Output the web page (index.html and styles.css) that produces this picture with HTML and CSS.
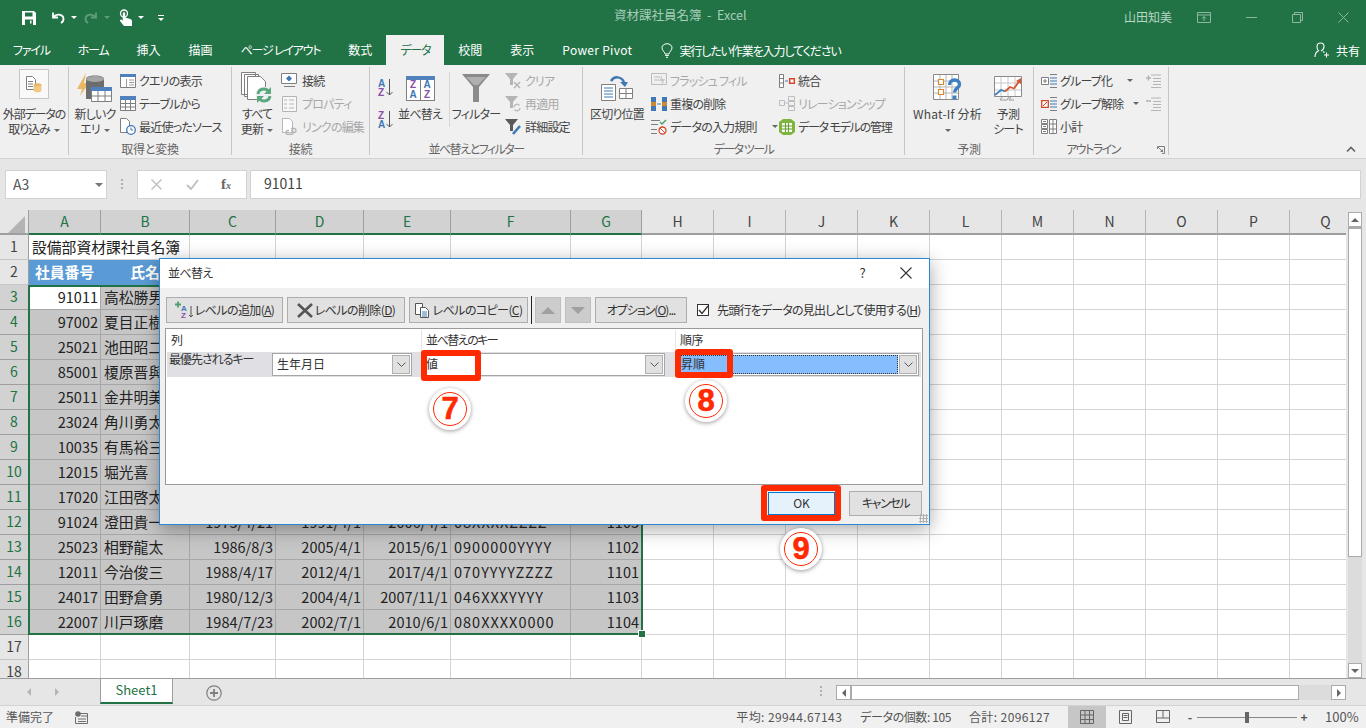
FILE: index.html
```html
<!DOCTYPE html>
<html lang="ja">
<head>
    <meta charset="UTF-8">
    <meta name="viewport" content="width=device-width, initial-scale=1.0">
    <title>資材課社員名簿 - Excel</title>
    <link rel="stylesheet" href="styles.css">
</head>
<body>
<div class="app">

    <!-- タイトルバー -->
    <header class="titlebar">
        <div class="qat">
            <svg class="qat-save" width="16" height="16" viewBox="0 0 16 16"><path fill="#fff" fill-rule="evenodd" d="M1 1h12l2 2v12H1zM4 2.500v4h7.500v-4zM4 9.500V15h8V9.500z"/><path fill="#fff" d="M9 10.500h1.500v3H9z"/></svg>
            <svg class="qat-undo" width="16" height="16" viewBox="0 0 16 16"><path fill="none" stroke="#fff" stroke-width="1.800" d="M3 2.500v5h5M3.500 7C6 3.500 13 4 13.500 8.500c.2 2-1 3.500-2.500 4.500"/></svg>
            <span class="caret-w"></span>
            <svg class="qat-redo" width="16" height="16" viewBox="0 0 16 16"><path fill="none" stroke="#5e9c7c" stroke-width="1.800" d="M13 2.500v5H8M12.500 7C10 3.500 3 4 2.500 8.500c-.2 2 1 3.500 2.500 4.500"/></svg>
            <span class="caret-w dim"></span>
            <svg class="qat-touch" width="14" height="18" viewBox="0 0 14 18"><circle cx="5" cy="4.500" r="3.500" fill="none" stroke="#fff" stroke-width="1.300"/><path fill="#fff" d="M3.800 4.500c0-1.600 2.400-1.600 2.400 0v4l5 1.500c1.200.4 1.800 1.200 1.800 2.400V17H5l-4-5c-.6-1 .8-2 1.800-1.200l1 .9z"/></svg>
            <span class="caret-w"></span>
            <span class="qat-more"></span>
        </div>
        <div class="doc-title">資材課社員名簿&nbsp; - &nbsp;Excel</div>
        <div class="win">
            <span class="user">山田知美</span>
            <svg class="win-ribbon" width="14" height="11" viewBox="0 0 14 11"><path fill="none" stroke="#8fb8a2" d="M.5.500h13v10H.500zM.5 3h13M7 9V4.500M5 6.500l2-2 2 2"/></svg>
            <svg class="win-btn" width="11" height="1" viewBox="0 0 11 1"><path stroke="#8fb8a2" d="M0 .5h11"/></svg>
            <svg class="win-btn" width="11" height="11" viewBox="0 0 11 11"><path fill="none" stroke="#8fb8a2" d="M.5 2.500h8v8h-8zM2.500 2.500v-2h8v8h-2"/></svg>
            <svg class="win-btn" width="11" height="11" viewBox="0 0 11 11"><path stroke="#8fb8a2" d="M.5.500l10 10M10.500.500l-10 10"/></svg>
        </div>
    </header>

    <!-- リボンのタブ -->
    <nav class="tabs">
        <span class="tab kana">ファイル</span>
        <span class="tab kana">ホーム</span>
        <span class="tab">挿入</span>
        <span class="tab">描画</span>
        <span class="tab kana">ページ レイアウト</span>
        <span class="tab">数式</span>
        <span class="tab kana active">データ</span>
        <span class="tab">校閲</span>
        <span class="tab">表示</span>
        <span class="tab latin">Power Pivot</span>
        <span class="tell">
            <svg width="12" height="15" viewBox="0 0 12 15"><path fill="none" stroke="#fff" d="M4 11c0-2-3-3.500-3-6.200C1 2.500 3.200.700 6 .700s5 1.800 5 4.100C11 7.500 8 9 8 11zM4.200 12.500h3.600M5 14.300h2"/></svg>
            <span class="tell-text">実行したい作業を入力してください</span>
        </span>
        <span class="share">
            <svg width="16" height="16" viewBox="0 0 16 16"><path fill="none" stroke="#fff" stroke-width="1.100" d="M1 15c0-3.500 2-5.500 3.500-6.200C3 7.500 3 5.800 3 4.500 3 2.500 4.500 1 6.500 1S10 2.500 10 4.500 9 8 7 9M9 9.500c.5.300 1 .7 1.400 1.100M12.500 10.500v5M10 13h5"/></svg>
            共有
        </span>
    </nav>

    <!-- リボン -->
    <div class="ribbon">
        <section class="group g-ext">
            <div class="group-body">
                <div class="big ext-btn">
                    <div class="ext-box">
                        <svg width="16" height="17" viewBox="0 0 16 17"><path fill="#fff" stroke="#7f7f7f" d="M.5.500h6l3 3v10h-9z"/><path stroke="#7f7f7f" d="M2 5.500h5M2 8h5M2 10.500h5"/><ellipse cx="11.500" cy="9" rx="4" ry="1.800" fill="#e8b866"/><path fill="#f1c983" d="M7.500 9v5.500c0 1 1.800 1.800 4 1.800s4-.8 4-1.800V9c0 1-1.800 1.800-4 1.800S7.500 10 7.500 9z"/></svg>
                    </div>
                    <span class="big-text">外部データの<br>取り込み<i class="caret"></i></span>
                </div>
            </div>
            <div class="group-label"></div>
        </section>

        <section class="group g-get">
            <div class="group-body">
                <div class="big b-query">
                    <div class="icon-slot">
                        <svg width="36" height="30" viewBox="0 0 36 30"><path fill="#e8b866" d="M9 0L0 16h5L3 23 12 10H7z"/><path fill="#6d6d6d" d="M9 6c0-2 4-3.500 9-3.500S27 4 27 6v20H9z"/><ellipse cx="18" cy="6" rx="9" ry="3" fill="#a6a6a6"/><path fill="#fff" stroke="#7f7f7f" d="M14.500 15.500h20v13h-20z"/><path fill="#4f81bd" d="M14 14h21v4H14z"/><path stroke="#7f7f7f" d="M21 18v10M28 18v10M15 23h19"/></svg>
                    </div>
                    <span class="big-text">新しいク<br>エリ<i class="caret"></i></span>
                </div>
                <div class="stack s-get">
                    <div class="row"><svg width="16" height="14" viewBox="0 0 16 14"><path fill="#fff" stroke="#7f7f7f" d="M.5.500h15v13H.500z"/><path fill="#4f81bd" d="M0 0h16v3H0z"/><path stroke="#9a9a9a" d="M9 6h5M9 8.500h5M9 11h5M6.500 5v8"/></svg>クエリの表示</div>
                    <div class="row"><svg width="16" height="15" viewBox="0 0 16 15"><path fill="#fff" stroke="#7f7f7f" d="M.5.500h15v14H.500z"/><path fill="#4f81bd" d="M0 0h16v4H0z"/><path stroke="#7f7f7f" d="M5.500 4v10M10.500 4v10M1 7.500h14M1 11h14"/></svg>テーブルから</div>
                    <div class="row"><svg width="16" height="17" viewBox="0 0 16 17"><path fill="#fff" stroke="#7f7f7f" d="M.5.500h6l3 3v11h-9z"/><circle cx="11" cy="12" r="4.300" fill="#fff" stroke="#3f78b5" stroke-width="1.300"/><path stroke="#3f78b5" fill="none" d="M11 9.500V12h2"/></svg>最近使ったソース</div>
                </div>
            </div>
            <div class="group-label">取得と変換</div>
        </section>

        <section class="group g-conn">
            <div class="group-body">
                <div class="big b-refresh">
                    <div class="icon-slot">
                        <svg width="32" height="32" viewBox="0 0 32 32"><path fill="#fff" stroke="#7f7f7f" d="M.5.500h14v22H.500zM3.500 2.500h14v22h-14z"/><path fill="#fff" stroke="#7f7f7f" d="M6.500 4.500h13l5 5v18h-18z"/><circle cx="23" cy="23" r="8.500" fill="#f0f0f0"/><path fill="none" stroke="#5ba87e" stroke-width="3" d="M17 22c.5-3 3-5 6-5 2 0 3.500 1 4.500 2.500M29 24c-.5 3-3 5-6 5-2 0-3.500-1-4.500-2.500"/><path fill="#5ba87e" d="M30 15v7h-7zM16 31v-7h7z"/></svg>
                    </div>
                    <span class="big-text">すべて<br>更新<i class="caret"></i></span>
                </div>
                <div class="stack s-conn">
                    <div class="row"><svg width="18" height="15" viewBox="0 0 18 15"><path fill="#fff" stroke="#7f7f7f" d="M.5.500h15v10H.500z"/><path fill="#3f78b5" d="M8 2.500l3 3-3 3-3-3z"/><path stroke="#7f7f7f" d="M3 13.500h11"/></svg>接続</div>
                    <div class="row off"><svg width="18" height="16" viewBox="0 0 18 16"><path fill="#f7f7f7" stroke="#b5b5b5" d="M1.500.500h14v15h-14z"/><path stroke="#b5b5b5" d="M3 4h3M8 4h5M3 8h3M8 8h5M3 12h3M8 12h5"/></svg>プロパティ</div>
                    <div class="row off"><svg width="18" height="17" viewBox="0 0 18 17"><path fill="#fff" stroke="#b5b5b5" d="M1.500.500h7l3 3v11h-10z"/><path fill="none" stroke="#b5b5b5" stroke-width="1.300" d="M8 12.500h-1a2 2 0 0 0 0 4h3a2 2 0 0 0 0-4M12 14.500h1a2 2 0 0 0 0-4h-3"/></svg>リンクの編集</div>
                </div>
            </div>
            <div class="group-label">接続</div>
        </section>

        <section class="group g-sort">
            <div class="group-body">
                <div class="az">
                    <div class="az-item"><span class="az-letters"><b class="blue">A</b><b class="purple">Z</b></span><svg width="7" height="17" viewBox="0 0 7 17"><path fill="none" stroke="#555" d="M3.500 0v16M.5 13l3 3 3-3"/></svg></div>
                    <div class="az-item"><span class="az-letters"><b class="purple">Z</b><b class="blue">A</b></span><svg width="7" height="17" viewBox="0 0 7 17"><path fill="none" stroke="#555" d="M3.500 0v16M.5 13l3 3 3-3"/></svg></div>
                </div>
                <div class="big b-sort">
                    <div class="icon-slot sort-icon">
                        <div class="sort-card"><span class="cell-c"><b class="purple">Z</b><b class="blue">A</b></span><span class="cell-c"><b class="blue">A</b><b class="purple">Z</b></span></div>
                    </div>
                    <span class="big-text">並べ替え</span>
                </div>
                <div class="sep"></div>
                <div class="big b-filter">
                    <div class="icon-slot">
                        <svg width="28" height="28" viewBox="0 0 28 28"><path fill="#8a8a8a" d="M0 0h28L17 13v15h-6V13z"/><path fill="#b0b0b0" d="M4 3h20l-8 8h-4z"/></svg>
                    </div>
                    <span class="big-text">フィルター</span>
                </div>
                <div class="stack s-filter">
                    <div class="row off"><svg width="17" height="16" viewBox="0 0 17 16"><path fill="#b5b5b5" d="M0 0h13L8 6v6H5V6z"/><path stroke="#b5b5b5" stroke-width="1.500" d="M9 9l6 6M15 9l-6 6"/></svg>クリア</div>
                    <div class="row off"><svg width="17" height="16" viewBox="0 0 17 16"><path fill="#b5b5b5" d="M0 0h13L8 6v6H5V6z"/><path fill="none" stroke="#b5b5b5" stroke-width="1.300" d="M9 11a3 3 0 0 1 5.500-1.500M15 12a3 3 0 0 1-5.500 1.500"/></svg>再適用</div>
                    <div class="row"><svg width="17" height="16" viewBox="0 0 17 16"><path fill="#5a5a5a" d="M0 0h13L8 6v6H5V6z"/><path stroke="#3f78b5" stroke-width="2.500" d="M8 15l7-8"/></svg>詳細設定</div>
                </div>
            </div>
            <div class="group-label tight">並べ替えとフィルター</div>
        </section>

        <section class="group g-tools">
            <div class="group-body">
                <div class="big b-split">
                    <div class="icon-slot">
                        <svg width="32" height="26" viewBox="0 0 32 26"><path fill="#fff" stroke="#7f7f7f" d="M.5 9.500h14v16H.500z"/><path stroke="#3f78b5" d="M3 13h9M3 16h9M3 19h9M3 22h9"/><path fill="#fff" stroke="#7f7f7f" d="M18.500 13.500h13v10h-13z"/><path stroke="#7f7f7f" d="M25 14v9M19 18.500h12"/><path fill="none" stroke="#3f78b5" stroke-width="2.500" d="M10 6C13 1 20 1 23 7"/><path fill="#3f78b5" d="M19 7h8l-3 5z"/></svg>
                    </div>
                    <span class="big-text">区切り位置</span>
                </div>
                <div class="stack s-tools1">
                    <div class="row off"><svg width="16" height="15" viewBox="0 0 16 15"><path fill="none" stroke="#bdbdbd" d="M.5.500h15v11H.500z"/><path stroke="#bdbdbd" d="M3 4h6M3 7h5"/><path fill="#c9c9c9" d="M11 2l-3 6h3l-1 6 4-8h-3z"/></svg>フラッシュ フィル</div>
                    <div class="row"><svg width="16" height="14" viewBox="0 0 16 14"><path fill="#3f78b5" d="M0 0h5v5H0z"/><path fill="#d08a2e" d="M0 5h5v4H0z"/><path fill="#3f78b5" d="M0 9h5v5H0zM11 0h5v5h-5z"/><path fill="#d08a2e" d="M11 5h5v4h-5z"/><path fill="#3f78b5" d="M11 9h5v5h-5zM6 6.500h4v1H6z"/></svg>重複の削除</div>
                    <div class="row"><svg width="16" height="16" viewBox="0 0 16 16"><path stroke="#7f7f7f" d="M0 1.500h9M0 5.500h7M0 10.500h6M0 14.500h6"/><path fill="none" stroke="#4ea06e" stroke-width="1.500" d="M9 3l2 2 4-4"/><circle cx="11.500" cy="11.500" r="3.500" fill="#fff" stroke="#d9452a" stroke-width="1.300"/><path stroke="#d9452a" d="M9 9l5 5"/></svg>データの入力規則<i class="caret far"></i></div>
                </div>
                <div class="stack s-tools2">
                    <div class="row"><svg width="16" height="14" viewBox="0 0 16 14"><path fill="#fff" stroke="#7f7f7f" d="M.5.500h4v13h-4z"/><path stroke="#7f7f7f" d="M1 4.500h3M1 9h3"/><path stroke="#3f78b5" d="M6 7h3"/><path fill="#fff" stroke="#d9452a" stroke-width="1.500" d="M10.700 4.700h4.600v4.600h-4.600z"/></svg>統合</div>
                    <div class="row off"><svg width="16" height="15" viewBox="0 0 16 15"><path fill="none" stroke="#bdbdbd" d="M.5 4.500h5v5h-5zM9.500.500h6v4h-6zM9.500 5.500h6v4h-6zM9.500 10.500h6v4h-6zM6 7h3"/></svg>リレーションシップ</div>
                    <div class="row tight-row"><svg width="16" height="16" viewBox="0 0 16 16"><path fill="#7eb53f" d="M0 3l4-3h8l4 3v10l-4 3H4l-4-3z"/><path fill="#fff" d="M3 4h10v9H3z"/><path stroke="#6a9e2f" stroke-width="1.200" d="M6.500 4v9M9.500 4v9M3 7h10M3 10h10"/></svg>データ モデルの管理</div>
                </div>
            </div>
            <div class="group-label tight">データ ツール</div>
        </section>

        <section class="group g-fore">
            <div class="group-body">
                <div class="big b-whatif">
                    <div class="icon-slot">
                        <svg width="30" height="28" viewBox="0 0 30 28"><path fill="#fff" stroke="#8a8a8a" d="M.5.500h25v25H.500z"/><path stroke="#b5b5b5" d="M7 1v24M13 1v24M19 1v24M1 7h24M1 13h24M1 19h24"/><path fill="#fff" stroke="#d98a2e" stroke-width="1.200" d="M5.500 5.500h5v5h-5zM5.500 15.500h5v5h-5z"/><path fill="none" stroke="#3f7fc0" stroke-width="3.400" d="M16.500 11c0-3 2-5 5-5s5 2 5 4.500c0 3.500-5 3.500-5 8"/><path fill="#3f7fc0" d="M19.500 21.500h4v4h-4z"/></svg>
                    </div>
                    <span class="big-text latin">What-If 分析<br><i class="caret solo"></i></span>
                </div>
                <div class="big b-sheet">
                    <div class="icon-slot">
                        <svg width="28" height="25" viewBox="0 0 28 25"><path fill="#fff" stroke="#8a8a8a" d="M.5.500h27v20H.500z"/><path stroke="#c8c8c8" d="M7 1v19M14 1v19M21 1v19M1 7h26M1 14h26"/><path fill="none" stroke="#3f7fc0" stroke-width="1.800" d="M1 19l6-5 4 1.500"/><path fill="none" stroke="#d9572f" stroke-width="1.800" d="M11 15.500l5-4.500 4 1.500 5-7"/><path fill="#d9572f" d="M27 2v6l-5-3z"/><path fill="none" stroke="#9a9a9a" d="M8 21l-2 3h7l2-3M17 21l-2 3h5"/></svg>
                    </div>
                    <span class="big-text">予測<br>シート</span>
                </div>
            </div>
            <div class="group-label">予測</div>
        </section>

        <section class="group g-outline">
            <div class="group-body">
                <div class="stack s-out1">
                    <div class="row"><svg width="16" height="14" viewBox="0 0 16 14"><path fill="#fff" stroke="#7f7f7f" d="M.5 3.500h7v7h-7z"/><path stroke="#7f7f7f" d="M2 7h4M4 5v4M9 .5h7M9 13.500h7"/><path stroke="#3f78b5" d="M9 4h7M9 7h7M9 10h7"/></svg>グループ化<i class="caret o1"></i></div>
                    <div class="row"><svg width="16" height="14" viewBox="0 0 16 14"><path fill="#fff" stroke="#d9452a" stroke-width="1.300" d="M.7 3.700h6.600v6.600H.700z"/><path stroke="#d9452a" d="M2 9l4-4"/><path stroke="#7f7f7f" d="M9 .5h7M9 13.500h7"/><path stroke="#3f78b5" d="M9 4h7M9 7h7M9 10h7"/></svg>グループ解除<i class="caret o2"></i></div>
                    <div class="row"><svg width="16" height="15" viewBox="0 0 16 15"><path fill="#fff" stroke="#7f7f7f" d="M.5.500h6v4h-6zM.5 5.500h6v4h-6zM.5 10.500h6v4h-6zM8.500.500h7v14h-7z"/><path stroke="#7f7f7f" d="M12 1v13M9 5h6M9 10h6M2 2.500h3M2 7.500h3M2 12.500h3"/></svg>小計</div>
                </div>
                <div class="stack s-out2">
                    <div class="row"><svg width="15" height="14" viewBox="0 0 15 14"><path stroke="#b5b5b5" d="M5 1h10M7 4.500h8M7 7.500h8M7 10.500h8M5 13.500h10"/><path stroke="#b5b5b5" stroke-width="1.600" d="M0 4h5M2.500 1.500v5"/></svg></div>
                    <div class="row"><svg width="15" height="14" viewBox="0 0 15 14"><path stroke="#b5b5b5" d="M5 1h10M7 4.500h8M7 7.500h8M7 10.500h8M5 13.500h10"/><path stroke="#b5b5b5" stroke-width="1.600" d="M0 4h5"/></svg></div>
                </div>
            </div>
            <div class="group-label tight outline-label">アウトライン</div>
            <svg class="launcher" width="8" height="8" viewBox="0 0 8 8"><path fill="none" stroke="#7f7f7f" d="M.5 3V.5H7.500V7.500H5"/><path stroke="#7f7f7f" d="M1 1l4 4"/><path fill="#7f7f7f" d="M6 3v3H3z"/></svg>
        </section>

        <svg class="collapse" width="10" height="6" viewBox="0 0 10 6"><path fill="none" stroke="#666" stroke-width="1.600" d="M1 5.500l4-4 4 4"/></svg>
    </div>

    <!-- 数式バー -->
    <div class="formula">
        <div class="name-box">A3<i class="caret big-caret"></i></div>
        <span class="dots"></span>
        <div class="fx-box">
            <svg width="11" height="11" viewBox="0 0 11 11"><path stroke="#c2c2c2" stroke-width="1.500" d="M.5.500l10 10M10.500.500l-10 10"/></svg>
            <svg width="13" height="11" viewBox="0 0 13 11"><path fill="none" stroke="#c2c2c2" stroke-width="2" d="M1 6l4 4 7-9"/></svg>
            <span class="fx"><i>f</i><small>x</small></span>
        </div>
        <div class="formula-input">91011</div>
    </div>

    <!-- シート -->
    <div class="sheet">
        <div class="grid-wrap">
            <table class="grid">
                <colgroup>
                    <col class="c-head"><col class="c-a"><col class="c-b"><col class="c-c"><col class="c-d"><col class="c-e"><col class="c-f"><col class="c-g">
                    <col class="c-x"><col class="c-x"><col class="c-x"><col class="c-x"><col class="c-x"><col class="c-x"><col class="c-x"><col class="c-x"><col class="c-x"><col class="c-x">
                </colgroup>
                <tr class="heads">
                    <th class="corner"><svg width="17" height="17" viewBox="0 0 17 17"><path fill="#b4b4b4" d="M17 0v17H0z"/></svg></th>
                    <th class="on">A</th><th class="on">B</th><th class="on">C</th><th class="on">D</th><th class="on">E</th><th class="on">F</th><th class="on">G</th>
                    <th>H</th><th>I</th><th>J</th><th>K</th><th>L</th><th>M</th><th>N</th><th>O</th><th>P</th><th>Q</th>
                </tr>
                <tr><th class="rh">1</th><td colspan="2">設備部資材課社員名簿</td><td></td><td></td><td></td><td></td><td></td><td></td><td></td><td></td><td></td><td></td><td></td><td></td><td></td><td></td><td></td></tr>
                <tr><th class="rh">2</th><td class="hd">社員番号</td><td class="hd">氏名</td><td class="hd">生年月日</td><td class="hd">入社日</td><td class="hd">配属日</td><td class="hd">電話番号</td><td class="hd">内線</td><td></td><td></td><td></td><td></td><td></td><td></td><td></td><td></td><td></td><td></td></tr>
                <tr class="sel"><th class="rh">3</th><td class="n active-cell">91011</td><td>高松勝男</td><td class="n">1975/5/12</td><td class="n">1998/4/1</td><td class="n">2012/4/1</td><td class="tel">090XXXXYYYY</td><td class="n">1101</td><td></td><td></td><td></td><td></td><td></td><td></td><td></td><td></td><td></td><td></td></tr>
                <tr class="sel"><th class="rh">4</th><td class="n">97002</td><td>夏目正樹</td><td class="n">1978/2/5</td><td class="n">2001/4/1</td><td class="n">2010/4/1</td><td class="tel">080XXXXYYYY</td><td class="n">1102</td><td></td><td></td><td></td><td></td><td></td><td></td><td></td><td></td><td></td><td></td></tr>
                <tr class="sel"><th class="rh">5</th><td class="n">25021</td><td>池田昭二</td><td class="n">1982/9/9</td><td class="n">2005/4/1</td><td class="n">2011/4/1</td><td class="tel">070XXXXYYYY</td><td class="n">1103</td><td></td><td></td><td></td><td></td><td></td><td></td><td></td><td></td><td></td><td></td></tr>
                <tr class="sel"><th class="rh">6</th><td class="n">85001</td><td>榎原晋與</td><td class="n">1970/3/3</td><td class="n">1993/4/1</td><td class="n">2008/4/1</td><td class="tel">090YYYYZZZZ</td><td class="n">1104</td><td></td><td></td><td></td><td></td><td></td><td></td><td></td><td></td><td></td><td></td></tr>
                <tr class="sel"><th class="rh">7</th><td class="n">25011</td><td>金井明美</td><td class="n">1984/1/8</td><td class="n">2006/4/1</td><td class="n">2013/4/1</td><td class="tel">080YYYYZZZZ</td><td class="n">1101</td><td></td><td></td><td></td><td></td><td></td><td></td><td></td><td></td><td></td><td></td></tr>
                <tr class="sel"><th class="rh">8</th><td class="n">23024</td><td>角川勇太</td><td class="n">1981/6/6</td><td class="n">2004/4/1</td><td class="n">2014/4/1</td><td class="tel">070YYYYXXXX</td><td class="n">1102</td><td></td><td></td><td></td><td></td><td></td><td></td><td></td><td></td><td></td><td></td></tr>
                <tr class="sel"><th class="rh">9</th><td class="n">10035</td><td>有馬裕三</td><td class="n">1976/7/7</td><td class="n">1999/4/1</td><td class="n">2009/4/1</td><td class="tel">090ZZZZXXXX</td><td class="n">1103</td><td></td><td></td><td></td><td></td><td></td><td></td><td></td><td></td><td></td><td></td></tr>
                <tr class="sel"><th class="rh">10</th><td class="n">12015</td><td>堀光喜</td><td class="n">1979/8/8</td><td class="n">2002/4/1</td><td class="n">2016/4/1</td><td class="tel">080ZZZZXXXX</td><td class="n">1104</td><td></td><td></td><td></td><td></td><td></td><td></td><td></td><td></td><td></td><td></td></tr>
                <tr class="sel"><th class="rh">11</th><td class="n">17020</td><td>江田啓太</td><td class="n">1983/4/4</td><td class="n">2007/4/1</td><td class="n">2015/4/1</td><td class="tel">070ZZZZXXXX</td><td class="n">1101</td><td></td><td></td><td></td><td></td><td></td><td></td><td></td><td></td><td></td><td></td></tr>
                <tr class="sel"><th class="rh">12</th><td class="n">91024</td><td>澄田貴一</td><td class="n">1973/4/21</td><td class="n">1991/4/1</td><td class="n">2006/4/1</td><td class="tel">08XXXXZZZZ</td><td class="n">1103</td><td></td><td></td><td></td><td></td><td></td><td></td><td></td><td></td><td></td><td></td></tr>
                <tr class="sel"><th class="rh">13</th><td class="n">25023</td><td>相野龍太</td><td class="n">1986/8/3</td><td class="n">2005/4/1</td><td class="n">2015/6/1</td><td class="tel">0900000YYYY</td><td class="n">1102</td><td></td><td></td><td></td><td></td><td></td><td></td><td></td><td></td><td></td><td></td></tr>
                <tr class="sel"><th class="rh">14</th><td class="n">12011</td><td>今治俊三</td><td class="n">1988/4/17</td><td class="n">2012/4/1</td><td class="n">2017/4/1</td><td class="tel">070YYYYZZZZ</td><td class="n">1101</td><td></td><td></td><td></td><td></td><td></td><td></td><td></td><td></td><td></td><td></td></tr>
                <tr class="sel"><th class="rh">15</th><td class="n">24017</td><td>田野倉勇</td><td class="n">1980/12/3</td><td class="n">2004/4/1</td><td class="n">2007/11/1</td><td class="tel">046XXXYYYY</td><td class="n">1103</td><td></td><td></td><td></td><td></td><td></td><td></td><td></td><td></td><td></td><td></td></tr>
                <tr class="sel"><th class="rh">16</th><td class="n">22007</td><td>川戸琢磨</td><td class="n">1984/7/23</td><td class="n">2002/7/1</td><td class="n">2010/6/1</td><td class="tel">080XXXX0000</td><td class="n">1104</td><td></td><td></td><td></td><td></td><td></td><td></td><td></td><td></td><td></td><td></td></tr>
                <tr><th class="rh">17</th><td></td><td></td><td></td><td></td><td></td><td></td><td></td><td></td><td></td><td></td><td></td><td></td><td></td><td></td><td></td><td></td><td></td></tr>
                <tr><th class="rh">18</th><td></td><td></td><td></td><td></td><td></td><td></td><td></td><td></td><td></td><td></td><td></td><td></td><td></td><td></td><td></td><td></td><td></td></tr>
            </table>
            <div class="selection"><span class="handle"></span></div>
        </div>
        <div class="vscroll">
            <div class="vbtn"><i class="tri-up"></i></div>
            <div class="vthumb"></div>
            <div class="vtrack"></div>
            <div class="vbtn"><i class="tri-down"></i></div>
        </div>
    </div>

    <!-- シート見出し -->
    <div class="sheetbar">
        <div class="sheet-nav"><i class="tri-left dim"></i><i class="tri-right dim"></i></div>
        <div class="sheet-tab">Sheet1</div>
        <svg class="add-sheet" width="16" height="16" viewBox="0 0 16 16"><circle cx="8" cy="8" r="7.200" fill="none" stroke="#7f7f7f" stroke-width="1.200"/><path stroke="#7f7f7f" stroke-width="1.800" d="M8 4v8M4 8h8"/></svg>
        <span class="dots sheet-dots"></span>
        <div class="hscroll">
            <div class="hbtn"><i class="tri-left"></i></div>
            <div class="hthumb"></div>
            <div class="htrack"></div>
            <div class="hbtn"><i class="tri-right"></i></div>
        </div>
    </div>

    <!-- ステータスバー -->
    <footer class="status">
        <span class="ready">準備完了</span>
        <svg class="macro" width="13" height="13" viewBox="0 0 13 13"><circle cx="3" cy="3" r="2.800" fill="#6d6d6d"/><path fill="none" stroke="#6d6d6d" d="M5 2.500h7.500v10H.500V6"/><path stroke="#6d6d6d" d="M3 8h8M3 10.500h8M6 5h6"/></svg>
        <span class="stat s-avg">平均: 29944.67143</span>
        <span class="stat s-count">データの個数: 105</span>
        <span class="stat s-sum">合計: 2096127</span>
        <div class="view active-view"><svg width="14" height="14" viewBox="0 0 14 14"><path fill="none" stroke="#666" d="M.5.500h13v13H.500zM5 1v12M9.500 1v12M1 5h12M1 9.500h12"/></svg></div>
        <div class="view"><svg width="13" height="14" viewBox="0 0 13 14"><path fill="none" stroke="#666" d="M.5.500h12v13H.500zM3.500 3.500h6v7h-6z"/><path stroke="#666" d="M4.500 5.500h4M4.500 7.500h4"/></svg></div>
        <div class="view"><svg width="14" height="14" viewBox="0 0 14 14"><path fill="none" stroke="#666" d="M.5.500h13v12H.500zM7 1v7M1 8h12"/></svg></div>
        <div class="zoom">
            <span class="zoom-btn">-</span>
            <div class="slider"><span class="slider-thumb"></span></div>
            <span class="zoom-btn">+</span>
            <span class="zoom-val">100%</span>
        </div>
    </footer>

    <!-- 並べ替えダイアログ -->
    <div class="dialog">
        <div class="dlg-title">
            <span>並べ替え</span>
            <span class="dlg-help">?</span>
            <svg width="12" height="12" viewBox="0 0 12 12"><path stroke="#333" stroke-width="1.100" d="M.5.500l11 11M11.500.500l-11 11"/></svg>
        </div>
        <div class="dlg-body">
            <div class="dlg-tools">
                <button class="btn b-add"><svg width="20" height="18" viewBox="0 0 20 18"><path stroke="#4ea06e" stroke-width="1.800" d="M0 3.500h6M3 .5v6"/><text x="6" y="10" class="mini blue">A</text><text x="6" y="17" class="mini purple">Z</text><path fill="none" stroke="#555" d="M16 5v11M14 14l2 2 2-2"/></svg><span>レベルの追加(<u>A</u>)</span></button>
                <button class="btn b-del"><svg width="16" height="15" viewBox="0 0 16 15"><path stroke="#555" stroke-width="2.600" d="M1 1l14 13M15 1L1 14"/></svg><span>レベルの削除(<u>D</u>)</span></button>
                <button class="btn b-copy"><svg width="15" height="15" viewBox="0 0 15 15"><path fill="#fff" stroke="#555" d="M.5.500h7v11h-7z"/><path fill="#fff" stroke="#555" d="M5.500 4.500h5l3 3v7h-8z"/><path stroke="#3f78b5" d="M7 9h5M7 11h5M7 13h5"/></svg><span>レベルのコピー(<u>C</u>)</span></button>
                <span class="tool-sep"></span>
                <button class="btn b-move"><i class="tri-up gray"></i></button>
                <button class="btn b-move"><i class="tri-down gray"></i></button>
                <button class="btn b-opt"><span>オプション(<u>O</u>)...</span></button>
                <label class="check"><span class="box"><svg width="11" height="10" viewBox="0 0 11 10"><path fill="none" stroke="#333" stroke-width="1.300" d="M1 5l3 3.500L10 1"/></svg></span><span>先頭行をデータの見出しとして使用する(<u>H</u>)</span></label>
            </div>
            <div class="levels">
                <div class="lv-head">
                    <span class="lh-col">列</span>
                    <span class="lh-key">並べ替えのキー</span>
                    <span class="lh-ord">順序</span>
                </div>
                <div class="lv-row">
                    <span class="lv-name">最優先されるキー</span>
                    <div class="combo c1"><span class="combo-val">生年月日</span><span class="combo-btn"><svg width="9" height="5" viewBox="0 0 9 5"><path fill="none" stroke="#555" d="M.5.500l4 4 4-4"/></svg></span></div>
                    <div class="combo c2"><span class="combo-val">値</span><span class="combo-btn"><svg width="9" height="5" viewBox="0 0 9 5"><path fill="none" stroke="#555" d="M.5.500l4 4 4-4"/></svg></span></div>
                    <div class="combo c3"><span class="combo-sel">昇順</span><span class="combo-btn"><svg width="9" height="5" viewBox="0 0 9 5"><path fill="none" stroke="#555" d="M.5.500l4 4 4-4"/></svg></span></div>
                </div>
            </div>
            <div class="dlg-foot">
                <button class="btn b-ok"><span>OK</span></button>
                <button class="btn b-cancel"><span>キャンセル</span></button>
            </div>
        </div>
        <span class="grip"></span>
    </div>

    <!-- 注釈 -->
    <span class="redbox rb7"></span>
    <span class="redbox rb8"></span>
    <span class="redbox rb9"></span>
    <span class="mark m7">7</span>
    <span class="mark m8">8</span>
    <span class="mark m9">9</span>
</div>
</body>
</html>
```

FILE: styles.css
```css
* {
    box-sizing: border-box;
}
html, body {
    margin: 0;
    padding: 0;
}
body {
    font-family: "Noto Sans CJK JP", "Noto Sans", sans-serif;
    font-feature-settings: "palt";
    font-size: 12px;
    color: #444;
    overflow: hidden;
}
i {
    font-style: normal;
}
svg {
    display: block;
    flex: none;
}
.app {
    position: relative;
    width: 1366px;
    height: 728px;
    display: flex;
    flex-direction: column;
    background: #e6e6e6;
    overflow: hidden;
}

/* title bar */
.titlebar {
    height: 35px;
    background: #217346;
    display: flex;
    align-items: center;
    position: relative;
    flex: none;
}
.qat {
    display: flex;
    align-items: center;
    padding-left: 21px;
    width: 400px;
}
.qat-undo { margin-left: 13px; }
.qat-redo { margin-left: 6px; }
.qat-touch { margin-left: 3px; }
.caret-w {
    width: 0;
    height: 0;
    margin-left: 5px;
    border: 3px solid transparent;
    border-top: 3px solid #fff;
    border-bottom: 0;
}
.caret-w.dim { border-top-color: #5e9c7c; margin-right: 6px; }
.qat-more {
    width: 6px;
    height: 6px;
    margin-left: 14px;
    border-top: 1px solid #fff;
    position: relative;
}
.qat-more::after {
    content: "";
    position: absolute;
    left: 0;
    top: 2px;
    border: 3px solid transparent;
    border-top: 3px solid #fff;
    border-bottom: 0;
}
.doc-title {
    position: absolute;
    left: 614px;
    top: 5px;
    color: #a9cdb8;
    font-size: 12.500px;
    line-height: 20px;
    white-space: nowrap;
}
.win {
    margin-left: auto;
    display: flex;
    align-items: center;
    padding-right: 17px;
}
.user {
    color: #b7d6c4;
    font-size: 12px;
    margin-right: 25px;
    margin-top: -2px;
}
.win-btn { margin-left: 35px; }

/* tabs */
.tabs {
    height: 30px;
    background: #217346;
    display: flex;
    color: #fff;
    flex: none;
    line-height: 29px;
}
.tab {
    padding: 0 14px;
    white-space: nowrap;
}
.tab:first-child { margin-left: -1px; }
.tab.kana { letter-spacing: -1.200px; }
.tab.latin { letter-spacing: 0.300px; }
.tab.active {
    background: #f0f0f0;
    color: #217346;
}
.tell {
    display: flex;
    align-items: center;
    gap: 6px;
    margin-left: 15px;
    white-space: nowrap;
}
.tell-text { letter-spacing: -1.100px; }
.share {
    margin-left: auto;
    padding-right: 6px;
    display: flex;
    align-items: center;
    gap: 6px;
}

/* ribbon */
.ribbon {
    height: 94px;
    background: #f0f0f0;
    border-bottom: 1px solid #d2d2d2;
    display: flex;
    flex: none;
    position: relative;
    letter-spacing: -0.800px;
}
.group {
    border-right: 1px solid #c6c6c6;
    margin: 2px 0 3px;
    display: flex;
    flex-direction: column;
    flex: none;
    position: relative;
}
.group-body {
    height: 73px;
    display: flex;
    flex: none;
}
.group-label {
    height: 17px;
    line-height: 17px;
    text-align: center;
    color: #666;
    white-space: nowrap;
    letter-spacing: -0.200px;
}
.group-label.tight { letter-spacing: -1.500px; }
.outline-label { padding-right: 16px; }
.g-ext { width: 69px; }
.g-get { width: 163px; }
.g-conn { width: 138px; }
.g-sort { width: 213px; }
.g-tools { width: 322px; }
.g-fore { width: 129px; }
.g-outline { width: 135px; }
.big {
    display: flex;
    flex-direction: column;
    align-items: center;
    flex: none;
    padding-top: 3px;
}
.icon-slot {
    height: 36px;
    display: flex;
    align-items: center;
    justify-content: center;
}
.big-text {
    line-height: 15px;
    text-align: center;
    white-space: nowrap;
}
.big-text.latin { letter-spacing: 0.200px; }
.ext-btn { width: 68px; padding-top: 2px; letter-spacing: -1.100px; }
.ext-box {
    width: 30px;
    height: 30px;
    background: #f9f9f9;
    border: 1px solid #c6c6c6;
    display: flex;
    align-items: center;
    justify-content: center;
    margin-bottom: 7px;
}
.caret {
    display: inline-block;
    width: 0;
    height: 0;
    margin-left: 4px;
    vertical-align: 2px;
    border: 3px solid transparent;
    border-top: 3px solid #666;
    border-bottom: 0;
}
.caret.solo { margin: 0; }
.caret.far { margin-left: 12px; }
.caret.o1 { margin-left: 12px; }
.caret.o2 { margin-left: 7px; }
.b-query { width: 42px; margin-left: 5px; }
.s-get { margin-left: 4px; }
.b-refresh { width: 40px; margin-left: 5px; }
.s-conn { margin-left: 4px; }
.stack {
    padding-top: 2px;
    flex: none;
}
.row {
    height: 23px;
    display: flex;
    align-items: center;
    gap: 3px;
    white-space: nowrap;
}
.row.off { color: #a8a8a8; }
.row.tight-row { letter-spacing: -1.200px; }
.az {
    width: 16px;
    margin-left: 8px;
    padding-top: 11px;
    flex: none;
}
.az-item {
    display: flex;
    align-items: center;
    height: 19px;
    margin-bottom: 13px;
    gap: 1px;
}
.az-letters {
    display: flex;
    flex-direction: column;
    font: bold 10px/9px "Liberation Sans", sans-serif;
    letter-spacing: 0;
}
.blue { color: #3f78b5; fill: #3f78b5; }
.purple { color: #8a4fa8; fill: #8a4fa8; }
.b-sort { width: 44px; margin-left: 4px; }
.sort-card {
    width: 29px;
    height: 25px;
    border: 1px solid #7f7f7f;
    border-top: 4px solid #4f81bd;
    background: #fff;
    display: flex;
}
.cell-c {
    flex: 1;
    display: flex;
    flex-direction: column;
    align-items: center;
    font: bold 10px/10px "Liberation Sans", sans-serif;
    letter-spacing: 0;
}
.cell-c + .cell-c { border-left: 1px solid #7f7f7f; }
.sep {
    width: 1px;
    height: 55px;
    margin: 5px 4px 0 7px;
    background: #d6d6d6;
    flex: none;
}
.b-filter { width: 44px; }
.s-filter { margin-left: 7px; }
.b-split { width: 56px; margin-left: 6px; }
.s-tools1 { width: 128px; margin-left: 6px; }
.b-whatif { width: 73px; margin-left: 6px; }
.b-sheet { width: 30px; margin-left: 9px; }
.s-out1 { width: 105px; margin-left: 7px; }
.launcher {
    position: absolute;
    right: 3px;
    bottom: 1px;
}
.collapse {
    position: absolute;
    left: 1346px;
    top: 81px;
}

/* formula bar */
.formula {
    height: 51px;
    padding: 11px 5px 11px 5px;
    display: flex;
    flex: none;
}
.name-box {
    width: 102px;
    background: #fff;
    border: 1px solid #d2d2d2;
    font-size: 14px;
    line-height: 27px;
    padding-left: 7px;
    position: relative;
    color: #555;
}
.big-caret {
    position: absolute;
    right: 3px;
    top: 12px;
    border-width: 4px;
    border-bottom: 0;
    border-top-color: #777;
}
.dots {
    width: 2px;
    height: 10px;
    margin: 9px 14px 0 14px;
    background: repeating-linear-gradient(#b0b0b0 0 2px, transparent 2px 4px);
    flex: none;
}
.fx-box {
    width: 110px;
    background: #fff;
    border: 1px solid #d2d2d2;
    display: flex;
    align-items: center;
    padding-left: 13px;
    gap: 24px;
    margin-right: 3px;
}
.fx {
    font: italic bold 15px "Liberation Serif", serif;
    color: #666;
    margin-left: -2px;
}
.fx small {
    font-size: 10px;
}
.formula-input {
    flex: 1;
    background: #fff;
    border: 1px solid #d2d2d2;
    font-size: 14px;
    line-height: 25px;
    padding-left: 13px;
    color: #444;
}

/* sheet */
.sheet {
    height: 469px;
    display: flex;
    flex: none;
    border-bottom: 1px solid #9e9e9e;
}
.grid-wrap {
    width: 1346px;
    height: 468px;
    position: relative;
    overflow: hidden;
    background: #fff;
}
.grid {
    table-layout: fixed;
    width: 1346px;
    border-collapse: separate;
    border-spacing: 0;
    font-size: 14.800px;
    color: #222;
}
.c-head { width: 29px; }
.c-a { width: 72px; }
.c-b { width: 89px; }
.c-c { width: 86px; }
.c-d { width: 88px; }
.c-e { width: 87px; }
.c-f { width: 120px; }
.c-g { width: 71px; }
.c-x { width: 72px; }
.grid td, .grid th {
    height: 25px;
    padding: 0;
    font-weight: normal;
    white-space: nowrap;
    overflow: hidden;
    line-height: 21px;
}
.grid td {
    border-right: 1px solid #d4d4d4;
    border-bottom: 1px solid #d4d4d4;
    padding: 0 3px 2px;
    background: #fff;
}
.heads th {
    background: #e6e6e6;
    border-right: 1px solid #b4b4b4;
    border-bottom: 2px solid #9e9e9e;
    text-align: center;
    color: #444;
    font-size: 14px;
}
.heads th.on {
    background: #d2d2d2;
    color: #217346;
    border-bottom-color: #217346;
    border-right-color: #9e9e9e;
}
.heads .corner {
    border-right: 1px solid #9e9e9e;
    border-bottom: 2px solid #9e9e9e;
}
.corner svg {
    margin: 5px 0 0 8px;
}
.grid .rh {
    background: #e6e6e6;
    border-right: 1px solid #9e9e9e;
    border-bottom: 1px solid #c6c6c6;
    padding-bottom: 1px;
    text-align: center;
    color: #444;
    font-size: 14px;
}
.grid .hd {
    background: #5b9bd5;
    border-color: #5b9bd5;
    color: #fff;
    font-weight: bold;
    text-align: center;
}
.grid .sel .rh {
    background: #d2d2d2;
    color: #217346;
    border-bottom-color: #9e9e9e;
}
.sel td:nth-child(-n+8) {
    background: #c6c6c6;
    border-color: #a6a6a6;
}
.grid .sel td.n {
    text-align: right;
    font-size: 14.500px;
    padding-right: 2px;
}
.sel td.tel {
    font-size: 14.500px;
    letter-spacing: 1px;
}
.sel td.active-cell {
    background: #fff;
}
.selection {
    position: absolute;
    left: 28px;
    top: 75px;
    width: 615px;
    height: 350px;
    border: 2px solid #217346;
    pointer-events: none;
}
.handle {
    position: absolute;
    right: -4px;
    bottom: -4px;
    width: 6px;
    height: 6px;
    background: #217346;
    outline: 1px solid #fff;
}
.vscroll {
    width: 20px;
    padding: 2px 4px 0 2px;
    display: flex;
    flex-direction: column;
    background: #e6e6e6;
}
.vbtn {
    height: 15px;
    background: #fff;
    border: 1px solid #ababab;
    display: flex;
    align-items: center;
    justify-content: center;
    flex: none;
}
.vthumb {
    height: 330px;
    background: #fff;
    border: 1px solid #ababab;
    border-top-width: 2px;
    flex: none;
}
.vtrack {
    flex: 1;
    background: #dcdcdc;
}
.tri-up, .tri-down, .tri-left, .tri-right {
    display: block;
    width: 0;
    height: 0;
    border: 4px solid transparent;
}
.tri-up { border-top: 0; border-bottom: 4px solid #666; }
.tri-down { border-bottom: 0; border-top: 4px solid #666; }
.tri-left { border-left: 0; border-right: 4px solid #666; }
.tri-right { border-right: 0; border-left: 4px solid #666; }
.tri-left.dim { border-right-color: #b4b4b4; }
.tri-right.dim { border-left-color: #b4b4b4; }
.tri-up.gray { border-width: 0 7px 7px; border-bottom-color: #a0a0a0; }
.tri-down.gray { border-width: 7px 7px 0; border-top-color: #a0a0a0; }

/* sheet tabs */
.sheetbar {
    height: 27px;
    background: #e6e6e6;
    border-bottom: 1px solid #d2d2d2;
    display: flex;
    align-items: flex-start;
    flex: none;
}
.sheet-nav {
    width: 100px;
    padding: 9px 0 0 27px;
    display: flex;
    gap: 24px;
}
.sheet-tab {
    width: 73px;
    height: 25px;
    background: #fff;
    border: 1px solid #9e9e9e;
    border-top: 0;
    border-bottom: 2px solid #217346;
    color: #217346;
    font-size: 13px;
    line-height: 22px;
    text-align: center;
}
.add-sheet {
    margin: 6px 0 0 33px;
}
.sheet-dots {
    margin: 7px 14px 0 598px;
}
.hscroll {
    width: 510px;
    height: 15px;
    margin-top: 6px;
    display: flex;
    background: #dcdcdc;
}
.hbtn {
    width: 15px;
    background: #fff;
    border: 1px solid #ababab;
    display: flex;
    align-items: center;
    justify-content: center;
    flex: none;
}
.hthumb {
    width: 448px;
    background: #fff;
    border: 1px solid #ababab;
    flex: none;
}
.htrack {
    flex: 1;
}

/* status bar */
.status {
    flex: 1;
    background: #f0f0f0;
    display: flex;
    align-items: center;
    color: #555;
    padding-left: 6px;
    font-size: 12px;
}
.ready { width: 69px; padding-bottom: 2px; }
.stat { margin-right: 18px; white-space: nowrap; letter-spacing: 0.400px; padding-bottom: 2px; }
.s-avg { margin-left: auto; }
.s-count { letter-spacing: -0.400px; }
.s-sum { margin-right: 17px; }
.view {
    width: 38px;
    height: 22px;
    display: flex;
    align-items: center;
    justify-content: center;
}
.active-view {
    background: #c6c6c6;
    margin-left: 1px;
}
.zoom {
    display: flex;
    align-items: center;
    margin-left: 3px;
}
.zoom-btn {
    font-weight: bold;
    width: 10px;
    text-align: center;
    color: #555;
    padding-bottom: 2px;
}
.slider {
    width: 100px;
    height: 1px;
    margin: 0 2px;
    background: #888;
    position: relative;
}
.slider-thumb {
    position: absolute;
    left: 48px;
    top: -5px;
    width: 4px;
    height: 11px;
    background: #666;
}
.zoom-val {
    width: 33px;
    margin: 0 8px 0 16px;
    font-size: 13px;
    padding-bottom: 2px;
    white-space: nowrap;
}

/* sort dialog */
.dialog {
    position: absolute;
    left: 159px;
    top: 258px;
    width: 771px;
    height: 267px;
    background: #f0f0f0;
    border: 1px solid #2b88d8;
    box-shadow: 0 4px 18px rgba(0, 0, 0, 0.35);
    color: #333;
    display: flex;
    flex-direction: column;
    letter-spacing: -0.600px;
}
.dlg-title {
    height: 29px;
    background: #fff;
    display: flex;
    align-items: center;
    padding: 0 17px 2px 8px;
    font-size: 12px;
    flex: none;
}
.dlg-help {
    margin-left: auto;
    margin-right: 35px;
    font-size: 13px;
}
.dlg-body {
    flex: 1;
    padding: 9px 6px 0 5px;
    display: flex;
    flex-direction: column;
}
.dlg-tools {
    display: flex;
    align-items: center;
    height: 26px;
    flex: none;
}
.btn {
    font: 12px "Noto Sans CJK JP", sans-serif;
    font-feature-settings: "palt";
    letter-spacing: -0.600px;
    color: #333;
    background: #e1e1e1;
    border: 1px solid #adadad;
    height: 26px;
    display: flex;
    align-items: center;
    justify-content: center;
    gap: 3px;
    padding: 0;
    margin: 0;
    flex: none;
}
.btn span { padding-bottom: 2px; }
.mini {
    font: bold 8px "Liberation Sans", sans-serif;
}
.b-add { width: 117px; margin-left: 1px; gap: 0; }
.b-del { width: 118px; margin-left: 4px; gap: 2px; }
.b-copy { width: 119px; margin-left: 4px; gap: 3px; }
.tool-sep {
    width: 1px;
    height: 28px;
    background: #222;
    margin: 0 3px;
    flex: none;
}
.b-move {
    width: 26px;
    margin-right: 4px;
    background: #ccc;
    border-color: #bfbfbf;
}
.b-opt { width: 92px; letter-spacing: -1px; }
.check {
    display: flex;
    align-items: center;
    gap: 8px;
    margin-left: 10px;
    white-space: nowrap;
    letter-spacing: -0.800px;
}
.check span:last-child { padding-bottom: 2px; }
.box {
    width: 12px;
    height: 12px;
    background: #fff;
    border: 1px solid #333;
    display: flex;
    align-items: center;
    justify-content: center;
}
.levels {
    height: 157px;
    margin-top: 5px;
    background: #fff;
    border: 1px solid #9a9a9a;
    padding: 1px;
    flex: none;
}
.lv-head {
    height: 22px;
    line-height: 20px;
    display: flex;
    position: relative;
}
.lh-col { margin-left: 4px; width: 250px; }
.lh-key { width: 254px; letter-spacing: -1.500px; }
.lh-key, .lh-ord {
    border-left: 1px solid #e4e4e4;
    padding-left: 4px;
}
.lv-row {
    height: 25px;
    background: #dfdfe4;
    display: flex;
    align-items: center;
}
.lv-name {
    width: 105px;
    padding-left: 2px;
    margin-top: -13px;
    letter-spacing: -1px;
    white-space: nowrap;
}
.combo {
    height: 23px;
    background: #fff;
    border: 1px solid #a6a6a6;
    display: flex;
    align-items: center;
    padding: 1px 1px 1px 4px;
    justify-content: space-between;
    font-size: 12px;
    letter-spacing: 0;
    flex: none;
}
.combo-val { padding-bottom: 2px; }
.combo-btn {
    width: 18px;
    height: 19px;
    background: #e1e1e1;
    border: 1px solid #b0b0b0;
    display: flex;
    align-items: center;
    justify-content: center;
}
.c1 { width: 140px; margin-right: 9px; }
.c2 { width: 244px; margin-right: 10px; }
.c3 { width: 244px; padding-left: 1px; }
.combo-sel {
    flex: 1;
    background: #86bdff;
    border: 1px dotted #333;
    height: 19px;
    line-height: 15px;
    padding-left: 3px;
    margin-right: 1px;
}
.dlg-foot {
    display: flex;
    justify-content: flex-end;
    gap: 14px;
    padding: 6px 1px 0 0;
}
.b-ok { width: 67px; height: 23px; margin-top: 1px; background: #e5f1fb; border-color: #0078d7; letter-spacing: 0; }
.b-cancel { width: 73px; height: 25px; letter-spacing: -1.400px; }
.grip {
    position: absolute;
    right: 1px;
    bottom: 1px;
    width: 9px;
    height: 9px;
    background: radial-gradient(circle, #b0b0b0 1px, transparent 1.200px) 0 0 / 3px 3px;
}

/* annotations */
.redbox {
    position: absolute;
    border: 6px solid #ff2a00;
    border-radius: 3px;
}
.rb7 { left: 421px; top: 350px; width: 60px; height: 31px; }
.rb8 { left: 675px; top: 349px; width: 58px; height: 29px; }
.rb9 { left: 761px; top: 485px; width: 80px; height: 36px; }
.mark {
    position: absolute;
    width: 42px;
    height: 42px;
    border-radius: 50%;
    background: #fff;
    box-shadow: 0 1px 4px rgba(0, 0, 0, 0.4);
    color: #ff2a00;
    font: bold 31px/42px "Liberation Sans", sans-serif;
    text-align: center;
    -webkit-text-stroke: 0.600px #ff2a00;
}
.mark::after {
    content: "";
    position: absolute;
    inset: 4px;
    border: 1.500px solid #ff2a00;
    border-radius: 50%;
}
.m7 { left: 429px; top: 388px; }
.m8 { left: 685px; top: 380px; }
.m9 { left: 780px; top: 528px; }
```
